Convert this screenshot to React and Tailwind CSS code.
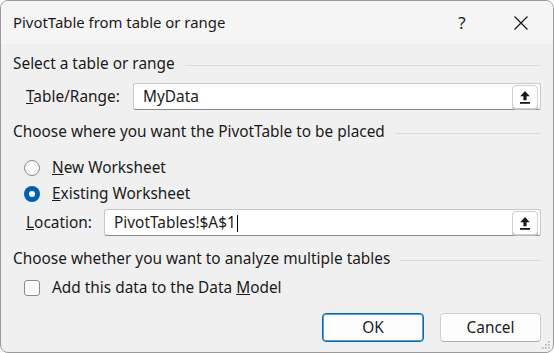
import React from 'react';

function Heading({ children }) {
  return (
    <div className="flex items-center gap-[10px] h-[22px]">
      <span className="whitespace-nowrap">{children}</span>
      <div className="flex-1 border-t border-[#dcdcdc] mt-[2px]" />
    </div>
  );
}

function UploadButton() {
  return (
    <div className="w-[26px] h-[24px] rounded-[4px] border border-[#d0d0d0] bg-white flex items-center justify-center shadow-[0_1px_0_#b8b8b8]">
      <svg width="12" height="14" viewBox="0 0 12 14">
        <path d="M6 1 L1.2 6.2 H4.4 V10.2 H7.6 V6.2 H10.8 Z" fill="#1a1a1a" />
        <rect x="1" y="12" width="10" height="1.8" fill="#1a1a1a" />
      </svg>
    </div>
  );
}

function RefInput({ value, caret }) {
  return (
    <div className="flex-1 h-[27px] bg-white border border-[#c8c8c8] border-b-[#8a8a8a] rounded-[3px] flex items-center pl-[9px] pr-[2px]">
      <span className="flex-1">
        {value}
        {caret && <span className="inline-block w-px h-[17px] bg-black align-middle ml-px" />}
      </span>
      <UploadButton />
    </div>
  );
}

function Grip() {
  return (
    <svg width="10" height="10" viewBox="0 0 10 10" className="absolute right-[2px] bottom-[2px]">
      {[[8, 2], [5, 5], [8, 5], [2, 8], [5, 8], [8, 8]].map(([x, y]) => (
        <rect key={x + '-' + y} x={x - 1} y={y - 1} width="1.6" height="1.6" fill="#b4b4b4" />
      ))}
    </svg>
  );
}

export default function App() {
  return (
    <div
      className="relative w-[554px] h-[353px] bg-[#f0f0f0] border border-[#9a9a9a] rounded-[8px] overflow-hidden flex flex-col text-[15.4px] text-[#1b1b1b]"
      style={{ fontFamily: '"Noto Sans", "Open Sans", sans-serif' }}
    >
      {/* title bar */}
      <div className="h-[43px] bg-[#f5f5f5] flex items-center pl-[12px] shrink-0">
        <span className="flex-1 text-[14.9px]">PivotTable from table or range</span>
        <span className="w-[20px] text-center text-[17px] mr-[41px]">?</span>
        <svg width="16" height="16" viewBox="0 0 16 16" className="mr-[24px]">
          <path d="M1.5 1.5 L14.5 14.5 M14.5 1.5 L1.5 14.5" stroke="#1b1b1b" strokeWidth="1.3" />
        </svg>
      </div>

      <div className="flex-1 px-[12px] pt-[9px] flex flex-col">
        <Heading>Select a table or range</Heading>
        <div className="flex items-center mt-[8px] pl-[13px]">
          <span className="w-[107px]"><u>T</u>able/Range:</span>
          <RefInput value="MyData" />
        </div>

        <div className="mt-[11px]">
          <Heading>Choose where you want the PivotTable to be placed</Heading>
        </div>
        <div className="flex items-center h-[26px] mt-[12px] pl-[11px]">
          <span className="w-[16px] h-[16px] rounded-full border border-[#8a8a8a] bg-[#fbfbfb]" />
          <span className="ml-[12px]"><u>N</u>ew Worksheet</span>
        </div>
        <div className="flex items-center h-[26px] pl-[11px]">
          <span className="w-[16px] h-[16px] rounded-full bg-[#005fb8] flex items-center justify-center">
            <span className="w-[6px] h-[6px] rounded-full bg-white" />
          </span>
          <span className="ml-[12px]"><u>E</u>xisting Worksheet</span>
        </div>
        <div className="flex items-center mt-[2px] pl-[13px]">
          <span className="w-[78px]"><u>L</u>ocation:</span>
          <RefInput value="PivotTables!$A$1" caret />
        </div>

        <div className="mt-[12px]">
          <Heading>Choose whether you want to analyze multiple tables</Heading>
        </div>
        <div className="flex items-center h-[26px] mt-[5px] pl-[11px]">
          <span className="w-[16px] h-[16px] rounded-[3px] border border-[#8a8a8a] bg-[#fbfbfb]" />
          <span className="ml-[12px]">Add this data to the Data <u>M</u>odel</span>
        </div>

        <div className="flex justify-end gap-[16px] mt-[12px]">
          <button className="w-[102px] h-[29px] rounded-[4px] bg-[#fdfdfd] border border-[#0067c0] shadow-[inset_0_0_0_1px_#5e9fd8]">OK</button>
          <button className="w-[101px] h-[29px] rounded-[4px] bg-[#fdfdfd] border border-[#d0d0d0] border-b-[#b0b0b0]">Cancel</button>
        </div>
      </div>
      <Grip />
    </div>
  );
}
